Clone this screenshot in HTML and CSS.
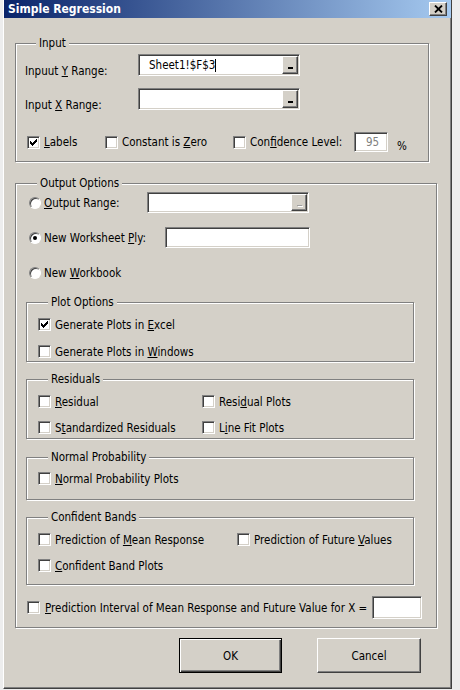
FILE: index.html
```html
<!DOCTYPE html>
<html lang="en">
<head>
    <meta charset="UTF-8">
    <meta name="viewport" content="width=device-width, initial-scale=1.0">
    <title>Simple Regression</title>
    <link rel="stylesheet" href="styles.css">
</head>
<body>
    <div class="dialog">
        <div class="titlebar">
            <span class="title">Simple Regression</span>
            <div class="close-btn">
                <svg width="9" height="8" viewBox="0 0 9 8"><path d="M1 0.5l7 7M8 0.5l-7 7" stroke="#000" stroke-width="1.8"/></svg>
            </div>
        </div>

        <div class="content">
            <div class="group input-group">
                <div class="group-title">Input</div>
                <div class="range-row row-y">
                    <span class="range-label">Inpuut <u>Y</u> Range:</span>
                    <div class="textbox range-box">
                        <span class="value">Sheet1!$F$3</span><span class="caret"></span>
                        <span class="ref-btn"><i></i></span>
                    </div>
                </div>
                <div class="range-row row-x">
                    <span class="range-label">Input <u>X</u> Range:</span>
                    <div class="textbox range-box">
                        <span class="ref-btn"><i></i></span>
                    </div>
                </div>
                <div class="input-checks">
                    <label class="check w-labels"><span class="box checked"></span><span class="text"><u>L</u>abels</span></label>
                    <label class="check w-constant"><span class="box"></span><span class="text">Constant is <u>Z</u>ero</span></label>
                    <label class="check w-confidence"><span class="box"></span><span class="text">Con<u>f</u>idence Level:</span></label>
                    <div class="textbox level-box">95</div>
                    <span class="percent">%</span>
                </div>
            </div>

            <div class="group output-group">
                <div class="group-title">Output Options</div>
                <div class="radio-row row-range">
                    <label class="radio w-range"><span class="dot"></span><span class="text"><u>O</u>utput Range:</span></label>
                    <div class="textbox out-box">
                        <span class="ref-btn disabled"><i></i></span>
                    </div>
                </div>
                <div class="radio-row row-ply">
                    <label class="radio w-ply"><span class="dot selected"></span><span class="text">New Worksheet <u>P</u>ly:</span></label>
                    <div class="textbox ply-box"></div>
                </div>
                <div class="radio-row row-book">
                    <label class="radio"><span class="dot"></span><span class="text">New <u>W</u>orkbook</span></label>
                </div>

                <div class="group sub-group plot-group">
                    <div class="group-title">Plot Options</div>
                    <div class="check-row first">
                        <label class="check"><span class="box checked"></span><span class="text">Generate Plots in <u>E</u>xcel</span></label>
                    </div>
                    <div class="check-row">
                        <label class="check"><span class="box"></span><span class="text">Generate Plots in <u>W</u>indows</span></label>
                    </div>
                </div>

                <div class="group sub-group residual-group">
                    <div class="group-title">Residuals</div>
                    <div class="check-row first">
                        <label class="check col-res"><span class="box"></span><span class="text"><u>R</u>esidual</span></label>
                        <label class="check"><span class="box"></span><span class="text">Resi<u>d</u>ual Plots</span></label>
                    </div>
                    <div class="check-row">
                        <label class="check col-res"><span class="box"></span><span class="text">S<u>t</u>andardized Residuals</span></label>
                        <label class="check"><span class="box"></span><span class="text">L<u>i</u>ne Fit Plots</span></label>
                    </div>
                </div>

                <div class="group sub-group normal-group">
                    <div class="group-title">Normal Probability</div>
                    <div class="check-row first">
                        <label class="check"><span class="box"></span><span class="text"><u>N</u>ormal Probability Plots</span></label>
                    </div>
                </div>

                <div class="group sub-group band-group">
                    <div class="group-title">Confident Bands</div>
                    <div class="check-row first">
                        <label class="check col-band"><span class="box"></span><span class="text">Prediction of <u>M</u>ean Response</span></label>
                        <label class="check"><span class="box"></span><span class="text">Prediction of Future <u>V</u>alues</span></label>
                    </div>
                    <div class="check-row">
                        <label class="check col-band"><span class="box"></span><span class="text"><u>C</u>onfident Band Plots</span></label>
                    </div>
                </div>

                <div class="interval-row">
                    <label class="check interval-label"><span class="box"></span><span class="text"><u>P</u>rediction Interval of Mean Response and Future Value for X =</span></label>
                    <div class="textbox x-box"></div>
                </div>
            </div>

            <div class="buttons">
                <button class="btn default">OK</button>
                <button class="btn cancel">Cancel</button>
            </div>
        </div>
    </div>
</body>
</html>
```

FILE: styles.css
```css
body {
    margin: 0;
    background-color: #ededed;
    font-family: 'DejaVu Sans Condensed', 'DejaVu Sans', sans-serif;
    font-stretch: condensed;
    font-size: 11.5px;
    color: #000;
}
u {
    text-underline-offset: 1px;
}
.dialog {
    box-sizing: border-box;
    width: 449px;
    height: 689px;
    margin-left: 3px;
    background-color: #d4d0c8;
    border-left: 1px solid #fff;
    border-right: 1px solid #404040;
    border-bottom: 1px solid #404040;
    box-shadow: inset -1px -1px #808080;
}
.titlebar {
    height: 18px;
    display: flex;
    align-items: center;
    justify-content: space-between;
    padding: 0 4px;
    background: linear-gradient(to right, #0a246a, #a6caf0);
}
.title {
    color: #fff;
    font-weight: bold;
    font-size: 12px;
}
.close-btn {
    box-sizing: border-box;
    width: 18px;
    height: 14px;
    display: flex;
    align-items: center;
    justify-content: center;
    background-color: #d4d0c8;
    border: 1px solid;
    border-color: #fff #404040 #404040 #fff;
    box-shadow: inset -1px -1px #808080;
}
.content {
    padding-left: 11px;
}

/* group boxes */
.group {
    box-sizing: border-box;
    border: 1px solid #808080;
    box-shadow: inset 1px 1px #fff, 1px 1px #fff;
}
.group-title {
    display: table;
    margin: -7px 0 0 11px;
    padding: 0 3px;
    line-height: 13px;
    background-color: #d4d0c8;
}
.sub-group .group-title {
    margin-left: 10px;
}

/* sunken fields */
.textbox, .box {
    box-sizing: border-box;
    background-color: #fff;
    border: 1px solid;
    border-color: #808080 #fff #fff #808080;
    box-shadow: inset 1px 1px #404040, inset -1px -1px #d4d0c8;
}
.textbox {
    display: flex;
    align-items: center;
}
.ref-btn {
    box-sizing: border-box;
    width: 16px;
    margin: 1px 1px 1px auto;
    align-self: stretch;
    display: flex;
    align-items: flex-end;
    justify-content: center;
    padding-bottom: 4px;
    background-color: #d4d0c8;
    border: 1px solid;
    border-color: #fff #404040 #404040 #fff;
    box-shadow: inset -1px -1px #808080;
}
.ref-btn i {
    display: block;
    width: 5px;
    height: 2px;
    background-color: #000;
}
.ref-btn.disabled i {
    background-color: #a0a0a0;
    height: 1px;
    box-shadow: 1px 1px #fff;
}

/* input section */
.input-group {
    margin-top: 25px;
    width: 414px;
    height: 119px;
    padding-left: 9px;
}
.range-row {
    display: flex;
    align-items: flex-end;
    height: 22px;
}
.row-y {
    margin-top: 4px;
}
.row-x {
    margin-top: 12px;
}
.range-label {
    width: 113px;
    line-height: 13px;
    margin-bottom: -2px;
}
.range-box {
    width: 162px;
    height: 22px;
    padding-left: 10px;
}
.caret {
    width: 1px;
    height: 13px;
    background-color: #000;
}
.input-checks {
    display: flex;
    align-items: center;
    height: 20px;
    margin: 22px 0 0 2px;
}
.w-labels {
    width: 78px;
}
.w-constant {
    width: 128px;
}
.w-confidence {
    width: 121px;
}
.level-box {
    width: 34px;
    height: 20px;
    justify-content: center;
    padding-left: 3px;
    color: #808080;
}
.percent {
    margin: 8px 0 0 9px;
}

/* check boxes and radios */
.check, .radio {
    display: flex;
    align-items: center;
    flex: none;
}
.box {
    width: 13px;
    height: 13px;
    flex: none;
    position: relative;
}
.box.checked::after {
    content: '';
    position: absolute;
    left: 2px;
    top: 2px;
    width: 7px;
    height: 7px;
    background: url("data:image/svg+xml,%3Csvg xmlns='http://www.w3.org/2000/svg' width='7' height='7'%3E%3Cpath d='M0 2h1v1h1v1h1V3h1V2h1V1h1V0h1v3H6v1H5v1H4v1H3v1H2V6H1V5H0z' fill='%23000'/%3E%3C/svg%3E");
}
.check .text {
    margin-left: 4px;
    white-space: nowrap;
}
.dot {
    box-sizing: border-box;
    width: 12px;
    height: 12px;
    flex: none;
    border-radius: 50%;
    background-color: #fff;
    border: 1px solid;
    border-color: #808080 #fff #fff #808080;
    box-shadow: inset 1px 1px #404040;
    position: relative;
}
.dot.selected::after {
    content: '';
    position: absolute;
    left: 3px;
    top: 3px;
    width: 4px;
    height: 4px;
    border-radius: 50%;
    background-color: #000;
}
.radio .text {
    margin-left: 3px;
    white-space: nowrap;
}

/* output section */
.output-group {
    margin-top: 21px;
    width: 422px;
    height: 445px;
    padding-left: 10px;
}
.radio-row {
    display: flex;
    align-items: center;
    padding-left: 3px;
}
.row-range {
    margin-top: 2px;
    height: 21px;
}
.row-ply {
    margin-top: 14px;
    height: 21px;
}
.row-book {
    margin-top: 18px;
    height: 13px;
}
.w-range {
    width: 118px;
}
.w-ply {
    width: 136px;
}
.out-box {
    width: 162px;
    height: 21px;
}
.ply-box {
    width: 145px;
    height: 21px;
}
.sub-group {
    width: 388px;
    padding-left: 11px;
}
.plot-group {
    margin-top: 23px;
    height: 60px;
}
.residual-group {
    margin-top: 17px;
    height: 60px;
}
.normal-group {
    margin-top: 18px;
    height: 43px;
}
.band-group {
    margin-top: 17px;
    height: 68px;
}
.check-row {
    display: flex;
    height: 13px;
    margin-top: 14px;
}
.residual-group .check-row, .band-group .check-row {
    margin-top: 13px;
}
.check-row.first {
    margin-top: 9px;
}
.normal-group .check-row.first {
    margin-top: 8px;
}
.col-res {
    width: 164px;
}
.col-band {
    width: 199px;
}
.interval-row {
    display: flex;
    align-items: center;
    height: 23px;
    margin-top: 11px;
    padding-left: 1px;
}
.interval-label {
    width: 345px;
}
.interval-label .text {
    margin-left: 5px;
}
.x-box {
    width: 50px;
    height: 23px;
}

/* buttons */
.buttons {
    display: flex;
    gap: 35px;
    margin: 10px 0 0 164px;
}
.btn {
    box-sizing: border-box;
    height: 35px;
    padding: 0;
    font: inherit;
    color: #000;
    background-color: #d4d0c8;
    border: 1px solid;
    border-color: #fff #404040 #404040 #fff;
    box-shadow: inset -1px -1px #808080;
}
.btn.default {
    width: 103px;
    border-color: #000;
    box-shadow: inset 1px 1px #fff, inset -1px -1px #404040, inset -2px -2px #808080;
}
.btn.cancel {
    width: 104px;
}
```
